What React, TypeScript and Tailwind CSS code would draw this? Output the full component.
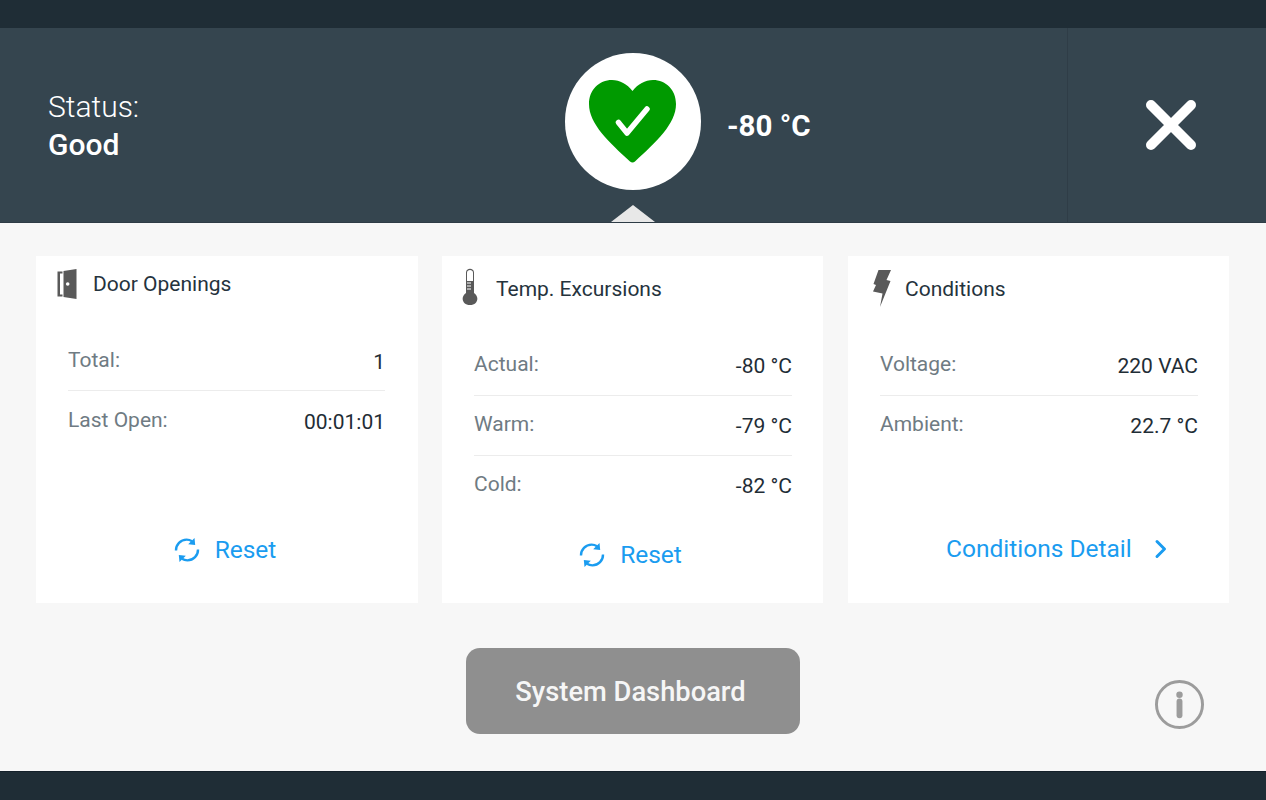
import React from "react";

const Row = ({ label, value, line, className = "" }: { label: string; value: string; line?: boolean; className?: string }) => (
  <div className={`flex justify-between items-center h-[60px] text-[21px] ${line ? "border-b border-[#ececec]" : ""} ${className}`}>
    <span className="text-[#6f7b83] -translate-y-[1px]">{label}</span>
    <span className="text-[#1f2d36] translate-y-[1px]">{value}</span>
  </div>
);

const ResetIcon = () => (
  <svg width="26" height="28" viewBox="0 0 26 28" fill="none">
    <path d="M2 14.5C1.8 8.5 6.6 3.6 12.6 3.6C14.6 3.6 16.5 4.2 18 5.2" stroke="#1a9cf0" strokeWidth="2.4" />
    <path d="M24 13.5C24.2 19.5 19.4 24.4 13.4 24.4C11.4 24.4 9.5 23.800 8 22.800" stroke="#1a9cf0" strokeWidth="2.4" />
    <path d="M20.500 2L21.200 9L14.200 8.300Z" fill="#1a9cf0" />
    <path d="M5.500 26L4.800 19L11.800 19.700Z" fill="#1a9cf0" />
  </svg>
);

const Reset = () => (
  <div className="flex items-center justify-center gap-[15px] text-[24.5px] text-[#1a9cf0] -translate-x-[2px]">
    <ResetIcon />
    <span>Reset</span>
  </div>
);

export default function App() {
  return (
    <div className="w-[1266px] h-[800px] flex flex-col overflow-hidden font-['Roboto',sans-serif] bg-[#f7f7f7]">
      <div className="h-[28px] bg-[#1f2d36]" />

      <div className="relative h-[195px] flex items-stretch bg-[#35454f] border-b border-[#2e3c46]">
        <div className="w-[565px] pl-[48px] pt-[60px] text-white text-[30px] leading-[38px]">
          <p className="font-light">Status:</p>
          <p className="font-medium">Good</p>
        </div>
        <div className="mt-[25px] w-[136px] h-[137px] rounded-full bg-white flex items-center justify-center">
          <svg className="mt-[1px] -ml-[1px]" width="87" height="84" viewBox="0 0 87 84">
            <path d="M43.5 11C38 4 31 0 23 0C10 0 0 10 0 24C0 44 20 62 41 81.5Q43.5 83.5 46 81.5C67 62 87 44 87 24C87 10 77 0 64 0C56 0 49 4 43.5 11Z" fill="#009a00" />
            <path d="M29.500 42.500L38 53L58 29" fill="none" stroke="white" strokeWidth="5.500" strokeLinecap="round" strokeLinejoin="round" />
          </svg>
        </div>
        <div className="ml-[26px] pt-[79px] text-white text-[29.5px] leading-[38px] font-bold">-80 °C</div>
        <div className="ml-auto w-[199px] border-l border-[#2f3d47] flex items-center justify-center pl-[8px]">
          <svg width="52" height="52" viewBox="0 0 52 52">
            <path d="M6 6L46 46M46 6L6 46" stroke="white" strokeWidth="10" strokeLinecap="round" />
          </svg>
        </div>
        <div className="absolute left-[611px] bottom-0 w-[44px] h-[17px] bg-[#e8e8e8] [clip-path:polygon(50%_0,100%_100%,0_100%)]" />
      </div>

      <div className="flex-1 flex flex-col px-[36px] pt-[33px]">
        <div className="flex">
          <div className="w-[382px] h-[347px] bg-white flex flex-col">
            <div className="flex items-center h-[56px] pl-[21px]">
              <svg width="20" height="30" viewBox="0 0 20 30">
                <path d="M5.500 2.500H0.500V27.500H5.500V25.500H3V4.500H5.500Z" fill="#595959" />
                <path d="M6.500 2L19.500 0V30L6.500 28Z" fill="#595959" />
                <circle cx="10.700" cy="15" r="1.800" fill="white" />
              </svg>
              <span className="ml-[16px] text-[21px] text-[#25333d] translate-y-[1px]">Door Openings</span>
            </div>
            <div className="ml-[32px] mr-[33px] mt-[19px]">
              <Row label="Total:" value="1" line className="pt-[2px]" />
              <Row label="Last Open:" value="00:01:01" className="pt-[2px]" />
            </div>
            <div className="mt-[81px]"><Reset /></div>
          </div>

          <div className="ml-[24px] w-[381px] h-[347px] bg-white flex flex-col">
            <div className="flex items-center h-[66px] pl-[19px]">
              <svg className="-mt-[5px]" width="18" height="38" viewBox="0 0 18 38">
                <path d="M5 25V4.5C5 -0.500 13 -0.500 13 4.5V25C19 29 16.500 37 9 37C1.500 37 -1 29 5 25Z" fill="#595959" />
                <path d="M6 4.500C6 1 12 1 12 4.500V13H6Z" fill="white" />
                <path d="M6 15H10M6 18H10M6 21H10" stroke="white" strokeWidth="1" fill="none" />
              </svg>
              <span className="ml-[17px] text-[21px] text-[#25333d] translate-y-[1px]">Temp. Excursions</span>
            </div>
            <div className="ml-[32px] mr-[31px] mt-[14px]">
              <Row label="Actual:" value="-80 °C" line />
              <Row label="Warm:" value="-79 °C" line />
              <Row label="Cold:" value="-82 °C" />
            </div>
            <div className="mt-[21px]"><Reset /></div>
          </div>

          <div className="ml-[25px] w-[381px] h-[347px] bg-white flex flex-col">
            <div className="flex items-center h-[66px] pl-[24px]">
              <svg className="-mt-[2px]" width="20" height="39" viewBox="0 0 20 39">
                <path d="M6.500 1H19L14.500 11L18.500 12L8 38L10.500 24.500L1 22.500L4 16L1.500 15Z" fill="#595959" />
              </svg>
              <span className="ml-[13px] text-[21px] text-[#25333d] translate-y-[1px]">Conditions</span>
            </div>
            <div className="ml-[32px] mr-[31px] mt-[14px]">
              <Row label="Voltage:" value="220 VAC" line />
              <Row label="Ambient:" value="22.7 °C" />
            </div>
            <div className="mt-[75px] flex items-center text-[24.5px] text-[#1a9cf0] pl-[98px]">
              <span>Conditions Detail</span>
              <svg className="ml-[22px]" width="14" height="20" viewBox="0 0 14 20">
                <path d="M3 2.500L10.500 10L3 17.500" fill="none" stroke="#1a9cf0" strokeWidth="3" strokeLinecap="round" strokeLinejoin="round" />
              </svg>
            </div>
          </div>
        </div>

        <div className="flex items-start mt-[45px]">
          <button className="ml-[430px] w-[334px] h-[86px] pr-[5px] pt-[2px] rounded-[14px] bg-[#8f8f8f] text-[27.3px] font-medium text-[#f6f6f6]">System Dashboard</button>
          <svg className="ml-[355px] mt-[32px]" width="49" height="49" viewBox="0 0 50 50">
            <circle cx="25" cy="25" r="23.500" fill="none" stroke="#9c9c9c" strokeWidth="3" />
            <circle cx="25" cy="15" r="3.300" fill="#9c9c9c" />
            <path d="M25 22V36" stroke="#9c9c9c" strokeWidth="6" strokeLinecap="round" />
          </svg>
        </div>
      </div>

      <div className="h-[29px] bg-[#1f2d36] border-t border-[#14202a]" />
    </div>
  );
}
